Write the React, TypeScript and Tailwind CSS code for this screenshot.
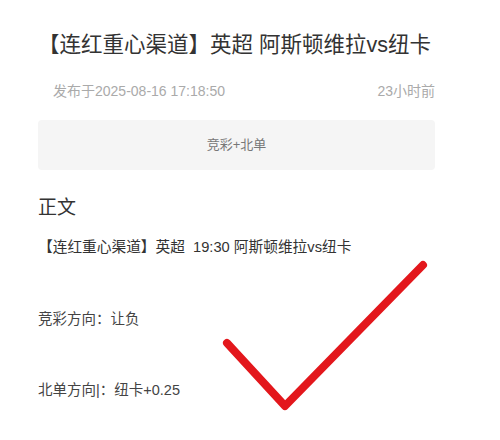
import React from "react";

export default function App() {
  return (
    <div
      className="relative w-[500px] h-[440px] bg-white overflow-hidden"
      style={{ fontFamily: '"Liberation Sans", "Noto Sans CJK SC", sans-serif' }}
    >
      <div className="w-[397px] ml-[38px] pt-[29px] flex flex-col">
        <h1 className="text-[21.5px] leading-[32px] text-[#333] font-normal whitespace-nowrap">
          【连红重心渠道】英超 阿斯顿维拉vs纽卡
        </h1>
        <div className="mt-[20px] pl-[15px] flex justify-between text-[14px] leading-[20px] text-[#aaa]">
          <span>发布于2025-08-16 17:18:50</span>
          <span>23小时前</span>
        </div>
        <div className="mt-[19px] h-[50px] rounded-[4px] bg-[#f5f5f5] flex items-center justify-center text-[13px] text-[#777]">
          竞彩+北单
        </div>
        <div className="mt-[24px] text-[19px] leading-[28px] text-[#333]">正文</div>
        <div className="mt-[15px] text-[14.7px] leading-[20px] text-[#333] whitespace-pre">
          【连红重心渠道】英超  19:30 阿斯顿维拉vs纽卡
        </div>
        <div className="mt-[52px] text-[14.5px] leading-[20px] text-[#444]">竞彩方向：让负</div>
        <div className="mt-[51px] text-[14.5px] leading-[20px] text-[#444]">北单方向|：纽卡+0.25</div>
      </div>
      <svg className="absolute left-0 top-0" width="500" height="440" viewBox="0 0 500 440">
        <polyline
          points="227,343 285,406 423,265"
          fill="none"
          stroke="#e3171c"
          strokeWidth="8"
          strokeLinecap="round"
          strokeLinejoin="round"
        />
      </svg>
    </div>
  );
}
